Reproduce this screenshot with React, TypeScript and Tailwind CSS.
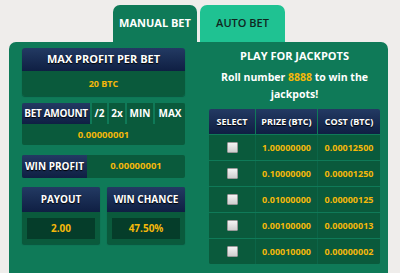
import React from 'react';

const font = { fontFamily: '"Open Sans", "Liberation Sans", sans-serif' };

// navy header cell used all over the panel
function NavyCell({ children, className = '' }: { children: React.ReactNode; className?: string }) {
  return (
    <div
      className={`flex items-center justify-center bg-linear-to-b from-[#233a63] to-[#0f1f43] text-white font-bold [text-shadow:0_1px_1px_#000] ${className}`}
    >
      {children}
    </div>
  );
}

function Checkbox() {
  return (
    <div className="w-[11px] h-[11px] rounded-[1px] border border-[#9a9a9a] bg-linear-to-b from-[#f4f4f4] to-[#cfcfcf]" />
  );
}

const rows = [
  ['1.00000000', '0.00012500'],
  ['0.10000000', '0.00001250'],
  ['0.01000000', '0.00000125'],
  ['0.00100000', '0.00000013'],
  ['0.00010000', '0.00000002'],
];

export default function App() {
  return (
    <div className="w-[400px] h-[273px] overflow-hidden bg-[#efedeb] pl-[9px] pt-[5px]" style={font}>
      {/* Tabs */}
      <div className="flex h-[37px]">
        <div className="ml-[104px] w-[84px] rounded-t-[7px] bg-[#0f7a58] flex items-center justify-center text-white font-bold text-[11px]">
          MANUAL BET
        </div>
        <div className="ml-[3px] w-[85px] rounded-t-[7px] bg-[#1fc292] flex items-center justify-center text-[#10261e] text-[11px] font-semibold">
          AUTO BET
        </div>
      </div>

      <div className="flex h-[240px]">
        {/* Left panel */}
        <div className="w-[188px] rounded-tl-[7px] bg-[#0f7a58] pl-[13px] pr-[12px] pt-[6px]">
          <div className="rounded-[3px] overflow-hidden shadow-[0_1px_1px_rgba(0,0,0,0.3)]">
            <NavyCell className="h-[23px] text-[11px]">MAX PROFIT PER BET</NavyCell>
            <div className="h-[25px] bg-[#0a5a3c] flex items-center justify-center text-[#f5b80a] font-bold text-[9px]">
              20 BTC
            </div>
          </div>

          <div className="mt-[7px] rounded-[2px] overflow-hidden bg-[#0a5a3c]">
            <div className="flex h-[21px] gap-[2px] bg-[#0f7a58]">
              <NavyCell className="w-[68px] text-[10px] tracking-[-0.3px]">BET AMOUNT</NavyCell>
              <div className="w-[15px] flex items-center justify-center bg-[#0a5a3c] text-white font-bold text-[10px]">/2</div>
              <div className="w-[16px] flex items-center justify-center bg-[#0a5a3c] text-white font-bold text-[10px]">2x</div>
              <div className="w-[26px] flex items-center justify-center bg-[#0a5a3c] text-white font-bold text-[10px]">MIN</div>
              <div className="flex-1 flex items-center justify-center bg-[#0a5a3c] text-white font-bold text-[10px]">MAX</div>
            </div>
            <div className="mt-[1px] h-[20px] flex items-center justify-center text-[#f5b80a] font-bold text-[9.5px]">
              0.00000001
            </div>
          </div>

          <div className="mt-[10px] flex h-[23px] rounded-[2px] overflow-hidden bg-[#0a5a3c]">
            <NavyCell className="w-[65px] text-[10px]">WIN PROFIT</NavyCell>
            <div className="flex-1 flex items-center justify-center text-[#f5b80a] font-bold text-[9.5px]">0.00000001</div>
          </div>

          <div className="mt-[9px] flex gap-[7px]">
            {[
              ['PAYOUT', '2.00'],
              ['WIN CHANCE', '47.50%'],
            ].map(([label, value]) => (
              <div key={label} className="flex-1 rounded-[2px] overflow-hidden bg-[#0a5a3c] shadow-[0_1px_1px_rgba(0,0,0,0.3)]">
                <NavyCell className="h-[25px] text-[10px]">{label}</NavyCell>
                <div className="p-[5px] pt-[6px]">
                  <div className="h-[21px] bg-[#053d2a] flex items-center justify-center text-[#f5b80a] font-bold text-[10px]">
                    {value}
                  </div>
                </div>
              </div>
            ))}
          </div>
        </div>

        {/* Right panel */}
        <div className="w-[191px] rounded-tr-[7px] bg-[#0f7a58] pl-[12px] pr-[8px]">
          <div className="pt-[5px] text-center text-white font-bold text-[11px] leading-[17px]">PLAY FOR JACKPOTS</div>
          <div className="mt-[5px] text-center text-white font-bold text-[10.5px] leading-[17px] px-[6px]">
            Roll number <span className="text-[#f5b80a]">8888</span> to win the jackpots!
          </div>

          <div className="mt-[6px] flex flex-col gap-[1px] rounded-[2px] overflow-hidden">
            <div className="flex h-[25px] gap-[1px]">
              <NavyCell className="w-[46px] text-[9px]">SELECT</NavyCell>
              <NavyCell className="w-[61px] text-[9px]">PRIZE (BTC)</NavyCell>
              <NavyCell className="flex-1 text-[9px]">COST (BTC)</NavyCell>
            </div>
            {rows.map(([prize, cost]) => (
              <div key={prize} className="flex h-[25px] gap-[1px] bg-[#0c6548]">
                <div className="w-[46px] bg-[#0a5a3c] flex items-center justify-center">
                  <Checkbox />
                </div>
                <div className="w-[61px] bg-[#0a5a3c] flex items-center justify-center text-[#f5b80a] font-bold text-[9px]">
                  {prize}
                </div>
                <div className="flex-1 bg-[#0a5a3c] flex items-center justify-center text-[#f5b80a] font-bold text-[9px]">
                  {cost}
                </div>
              </div>
            ))}
          </div>
        </div>
      </div>
    </div>
  );
}
